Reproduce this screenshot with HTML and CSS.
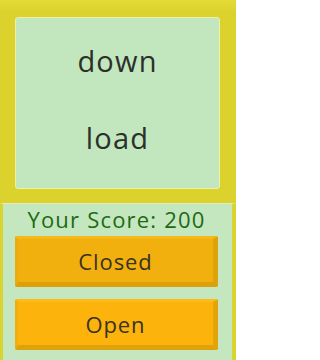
FILE: index.html
```html
<!DOCTYPE html>
<html>
<head>
<meta charset="utf-8">
<link rel="stylesheet" href="styles.css">
</head>
<body>
<div class="app">
  <section class="top">
    <div class="card">
      <div class="word">down</div>
      <div class="word">load</div>
    </div>
  </section>
  <section class="bottom">
    <div class="score">Your Score: 200</div>
    <div class="btn closed">Closed</div>
    <div class="btn open">Open</div>
  </section>
</div>
</body>
</html>
```
FILE: styles.css
```css
html, body {
  margin: 0;
  padding: 0;
}
body {
  width: 236px;
  height: 360px;
  overflow: hidden;
  font-family: "Open Sans", "DejaVu Sans", sans-serif;
}
.app {
  display: flex;
  flex-direction: column;
  height: 360px;
}
.top {
  height: 203px;
  box-sizing: border-box;
  padding: 17px 16px 14px 15px;
  background: linear-gradient(#e5db38, #dbd22e 12px);
}
.card {
  box-sizing: border-box;
  height: 172px;
  background: #c2e6bd;
  border: 1px solid #eef2a2;
  border-radius: 3px;
  display: flex;
  flex-direction: column;
  justify-content: space-around;
  align-items: center;
  padding: 4px 0 12px;
}
.word {
  font-size: 29px;
  color: #2b302b;
  line-height: 34px;
  letter-spacing: 1.2px;
}
.bottom {
  flex: 1;
  box-sizing: border-box;
  background: #c4e7c0;
  border-left: 3px solid #d9d42f;
  border-right: 4px solid #d9d42f;
  border-top: 1px solid #e8eab0;
  padding: 1px 14px 0 12px;
  display: flex;
  flex-direction: column;
  align-items: stretch;
}
.score {
  text-align: center;
  font-size: 22px;
  line-height: 28px;
  color: #1e6a14;
  letter-spacing: 1.2px;
  margin-bottom: 3px;
}
.btn {
  box-sizing: border-box;
  height: 51px;
  display: flex;
  align-items: center;
  justify-content: center;
  font-size: 22px;
  color: #3a3220;
  letter-spacing: 0.9px;
  border-style: solid;
  border-width: 3px 5px 5px 3px;
  border-radius: 2px;
}
.closed {
  background: #f2b00f;
  border-color: #f4b818 #dea20a #dca00a #eaab0f;
}
.open {
  margin-top: 12px;
  background: #fcb30b;
  border-color: #fdba18 #e3a409 #e0a209 #f2ae0c;
}
```
